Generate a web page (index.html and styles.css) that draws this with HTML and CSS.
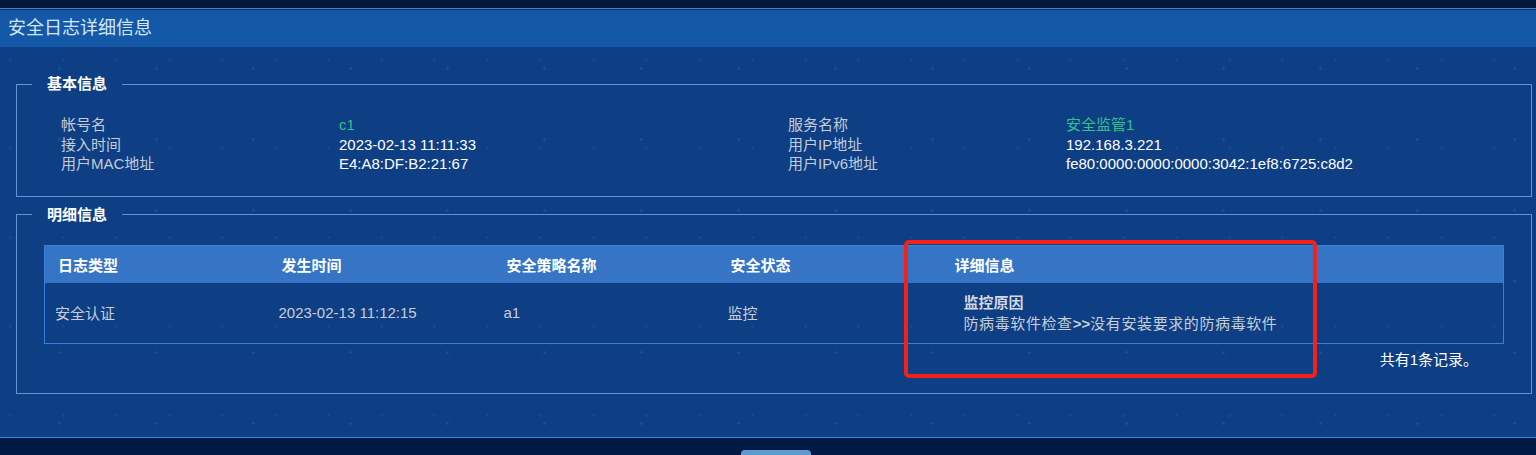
FILE: index.html
```html
<!DOCTYPE html>
<html lang="zh-CN">
<head>
    <meta charset="UTF-8">
    <meta name="viewport" content="width=device-width, initial-scale=1.0">
    <title>安全日志详细信息</title>
    <link rel="stylesheet" href="styles.css">
</head>
<body>
    <div class="top-strip"></div>
    <div class="panel">
        <div class="panel-title">安全日志详细信息</div>
        <div class="panel-body">
            <fieldset class="group">
                <legend>基本信息</legend>
                <div class="info-grid">
                    <span class="label">帐号名</span>
                    <span class="value green">c1</span>
                    <span class="label">服务名称</span>
                    <span class="value green">安全监管1</span>

                    <span class="label">接入时间</span>
                    <span class="value">2023-02-13 11:11:33</span>
                    <span class="label">用户IP地址</span>
                    <span class="value">192.168.3.221</span>

                    <span class="label">用户MAC地址</span>
                    <span class="value">E4:A8:DF:B2:21:67</span>
                    <span class="label">用户IPv6地址</span>
                    <span class="value">fe80:0000:0000:0000:3042:1ef8:6725:c8d2</span>
                </div>
            </fieldset>

            <fieldset class="group detail-group">
                <legend>明细信息</legend>
                <div class="table-wrap">
                    <table class="log-table">
                        <colgroup>
                            <col class="c1">
                            <col class="c2">
                            <col class="c3">
                            <col class="c4">
                            <col>
                        </colgroup>
                        <thead>
                            <tr>
                                <th>日志类型</th>
                                <th>发生时间</th>
                                <th>安全策略名称</th>
                                <th>安全状态</th>
                                <th>详细信息</th>
                            </tr>
                        </thead>
                        <tbody>
                            <tr>
                                <td>安全认证</td>
                                <td>2023-02-13 11:12:15</td>
                                <td>a1</td>
                                <td>监控</td>
                                <td class="detail">
                                    <div class="reason">监控原因</div>
                                    <div class="reason-text">防病毒软件检查<b>&gt;&gt;</b>没有安装要求的防病毒软件</div>
                                </td>
                            </tr>
                        </tbody>
                    </table>
                    <div class="count">共有1条记录。</div>
                </div>
            </fieldset>

            <div class="mark"></div>
        </div>
    </div>
    <div class="bottom-strip">
        <div class="tab"></div>
    </div>
</body>
</html>
```

FILE: styles.css
```css
body {
    margin: 0;
    background-color: #011a44;
    font-family: 'Liberation Sans', 'Noto Sans CJK SC', sans-serif;
    font-size: 15px;
    color: #ffffff;
    overflow: hidden;
}
.top-strip {
    height: 8px;
    background-color: #011838;
    border-bottom: 1px solid #3b84db;
}
.panel {
    border-top: 1px solid #0a2a5c;
    background-color: #0e3e83;
    background-image:
        radial-gradient(circle, rgba(70, 140, 230, 0.22) 1px, transparent 1.6px),
        radial-gradient(circle, rgba(70, 140, 230, 0.14) 1px, transparent 1.6px);
    background-size: 97px 71px, 53px 89px;
    background-position: 11px 23px, 37px 5px;
}
.panel-title {
    height: 37px;
    line-height: 37px;
    padding-left: 8px;
    background-color: #1459a7;
    color: #d2e6f8;
    font-size: 18px;
}
.panel-body {
    position: relative;
    padding: 27px 4px 43px 16px;
}
.group {
    margin: 0;
    padding: 21px 15px 22px 15px;
    border: 1px solid #5a98d6;
}
.group legend {
    padding: 0 15px;
    line-height: 20px;
    font-weight: bold;
    color: #ffffff;
}
.detail-group {
    margin-top: 8px;
    padding-top: 20px;
    padding-bottom: 23px;
}
.info-grid {
    display: grid;
    grid-template-columns: 278px 449px 278px 449px;
    padding-left: 29px;
    line-height: 19.5px;
}
.label {
    color: #c3ccd8;
}
.value {
    color: #ffffff;
}
.value.green {
    color: #33c08c;
}
.table-wrap {
    margin: 0 12px;
}
.log-table {
    width: 100%;
    border-collapse: collapse;
    table-layout: fixed;
    border: 1px solid #3a80d8;
}
.log-table col.c1 { width: 224px; }
.log-table col.c2 { width: 225px; }
.log-table col.c3 { width: 224px; }
.log-table col.c4 { width: 224px; }
.log-table th {
    height: 37px;
    padding: 0 0 0 13px;
    background-color: #3674c5;
    color: #ffffff;
    font-weight: bold;
    text-align: left;
}
.log-table td {
    height: 60px;
    padding: 0 0 0 10px;
    color: #c8ced8;
    vertical-align: middle;
}
.log-table td.detail {
    padding-left: 22px;
    line-height: 20.5px;
}
.reason {
    font-weight: bold;
    color: #d4d8e0;
    padding-top: 2px;
}
.reason-text {
    letter-spacing: 0.6px;
}
.reason-text b {
    letter-spacing: 0;
}
.count {
    margin-top: 6px;
    padding-right: 26px;
    text-align: right;
    line-height: 20px;
    color: #ffffff;
}
.mark {
    position: absolute;
    left: 904px;
    top: 193px;
    width: 413px;
    height: 138px;
    box-sizing: border-box;
    border: 4px solid #f4211a;
    border-radius: 5px;
}
.bottom-strip {
    height: 17px;
    border-top: 1px solid #3a82e0;
    background-color: #011a44;
    position: relative;
}
.tab {
    position: absolute;
    left: 741px;
    top: 12px;
    width: 70px;
    height: 10px;
    border-radius: 4px 4px 0 0;
    background-color: #5b9ad2;
}
```
